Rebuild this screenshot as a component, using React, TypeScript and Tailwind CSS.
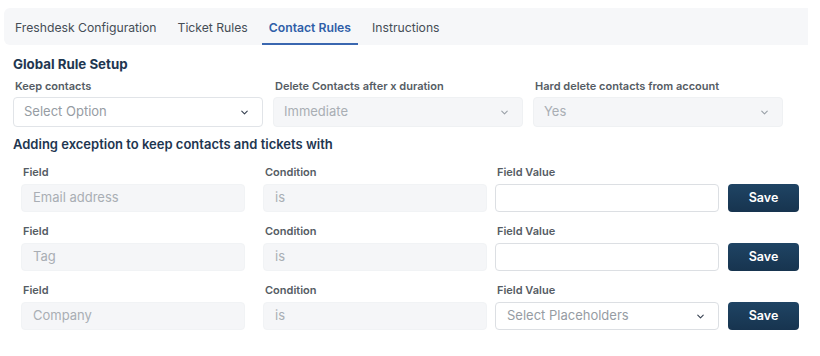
import { ChevronDown } from 'lucide-react'

const tabs = ['Freshdesk Configuration', 'Ticket Rules', 'Contact Rules', 'Instructions']

const globalRules = [
    { label: 'Keep contacts', value: 'Select Option', disabled: false },
    { label: 'Delete Contacts after x duration', value: 'Immediate', disabled: true },
    { label: 'Hard delete contacts from account', value: 'Yes', disabled: true },
]

const exceptions = [
    { field: 'Email address', select: false },
    { field: 'Tag', select: false },
    { field: 'Company', select: true },
]

const Label = ({ children }: { children: string }) => (
    <div className="h-[16px] pl-[2px] text-[11px] leading-[16px] font-semibold text-[#555c64]">{children}</div>
)

const App = () => {
    return (
        <div className="w-[820px] h-[356px] bg-white pt-[8px] font-['Inter',sans-serif] overflow-hidden">
            {/* tabs */}
            <div className="ml-[4px] w-[804px] h-[37px] bg-[#f6f7f9] rounded-l-[6px] flex gap-[7px] pl-[4px]">
                {tabs.map((t) => {
                    const active = t === 'Contact Rules'
                    return (
                        <div
                            key={t}
                            className={
                                active
                                    ? 'px-[7px] flex items-center text-[12.2px] font-semibold text-[#2f5ea8] border-b-2 border-[#3a67b0] pt-[5px]'
                                    : 'px-[7px] flex items-center text-[12.2px] text-[#454d56] border-b-2 border-transparent pt-[5px]'
                            }
                        >
                            {t}
                        </div>
                    )
                })}
            </div>

            <div className="pl-[13px]">
                <h2 className="mt-[11px] h-[16px] leading-[16px] text-[13.3px] font-bold text-[#1e3650]">Global Rule Setup</h2>

                <div className="mt-[6px] flex gap-[10px]">
                    {globalRules.map((r) => (
                        <div key={r.label} className="w-[250px]">
                            <Label>{r.label}</Label>
                            <div
                                className={
                                    r.disabled
                                        ? 'mt-[3px] h-[30px] rounded-[4px] border border-[#eff1f3] bg-[#f5f6f8] flex items-center justify-between pl-[10px] pr-[12px]'
                                        : 'mt-[3px] h-[30px] rounded-[4px] border border-[#e1e4e8] bg-white flex items-center justify-between pl-[10px] pr-[12px]'
                                }
                            >
                                <span className={r.disabled ? 'text-[13px] text-[#a9aeb4]' : 'text-[13px] text-[#969ca3]'}>{r.value}</span>
                                <ChevronDown
                                    className={r.disabled ? 'w-[11px] h-[11px] text-[#9aa1a8]' : 'w-[11px] h-[11px] text-[#374151]'}
                                    strokeWidth={2.4}
                                />
                            </div>
                        </div>
                    ))}
                </div>

                <h2 className="mt-[9px] h-[16px] leading-[16px] text-[13px] font-semibold text-[#1e3650]">
                    Adding exception to keep contacts and tickets with
                </h2>

                <div className="mt-[12px] pl-[8px] flex flex-col gap-[11px]">
                    {exceptions.map((e) => (
                        <div key={e.field} className="flex items-end">
                            <div className="w-[224px]">
                                <Label>Field</Label>
                                <div className="mt-[4px] h-[28px] rounded-[4px] border border-[#f1f3f5] bg-[#f5f6f8] flex items-center pl-[11px] text-[13px] text-[#a9aeb4]">
                                    {e.field}
                                </div>
                            </div>
                            <div className="w-[224px] ml-[18px]">
                                <Label>Condition</Label>
                                <div className="mt-[4px] h-[28px] rounded-[4px] border border-[#f1f3f5] bg-[#f5f6f8] flex items-center pl-[11px] text-[13px] text-[#a9aeb4]">
                                    is
                                </div>
                            </div>
                            <div className="w-[224px] ml-[8px]">
                                <Label>Field Value</Label>
                                {e.select ? (
                                    <div className="mt-[4px] h-[28px] rounded-[4px] border border-[#dcdfe3] bg-white flex items-center justify-between pl-[11px] pr-[12px]">
                                        <span className="text-[13px] text-[#969ca3]">Select Placeholders</span>
                                        <ChevronDown className="w-[11px] h-[11px] text-[#374151]" strokeWidth={2.4} />
                                    </div>
                                ) : (
                                    <div className="mt-[4px] h-[28px] rounded-[4px] border border-[#dcdfe3] bg-white" />
                                )}
                            </div>
                            <button className="ml-[9px] w-[71px] h-[28px] rounded-[4px] bg-gradient-to-b from-[#1f4464] to-[#17344f] text-white text-[12.5px] font-semibold">
                                Save
                            </button>
                        </div>
                    ))}
                </div>
            </div>
        </div>
    )
}

export default App
